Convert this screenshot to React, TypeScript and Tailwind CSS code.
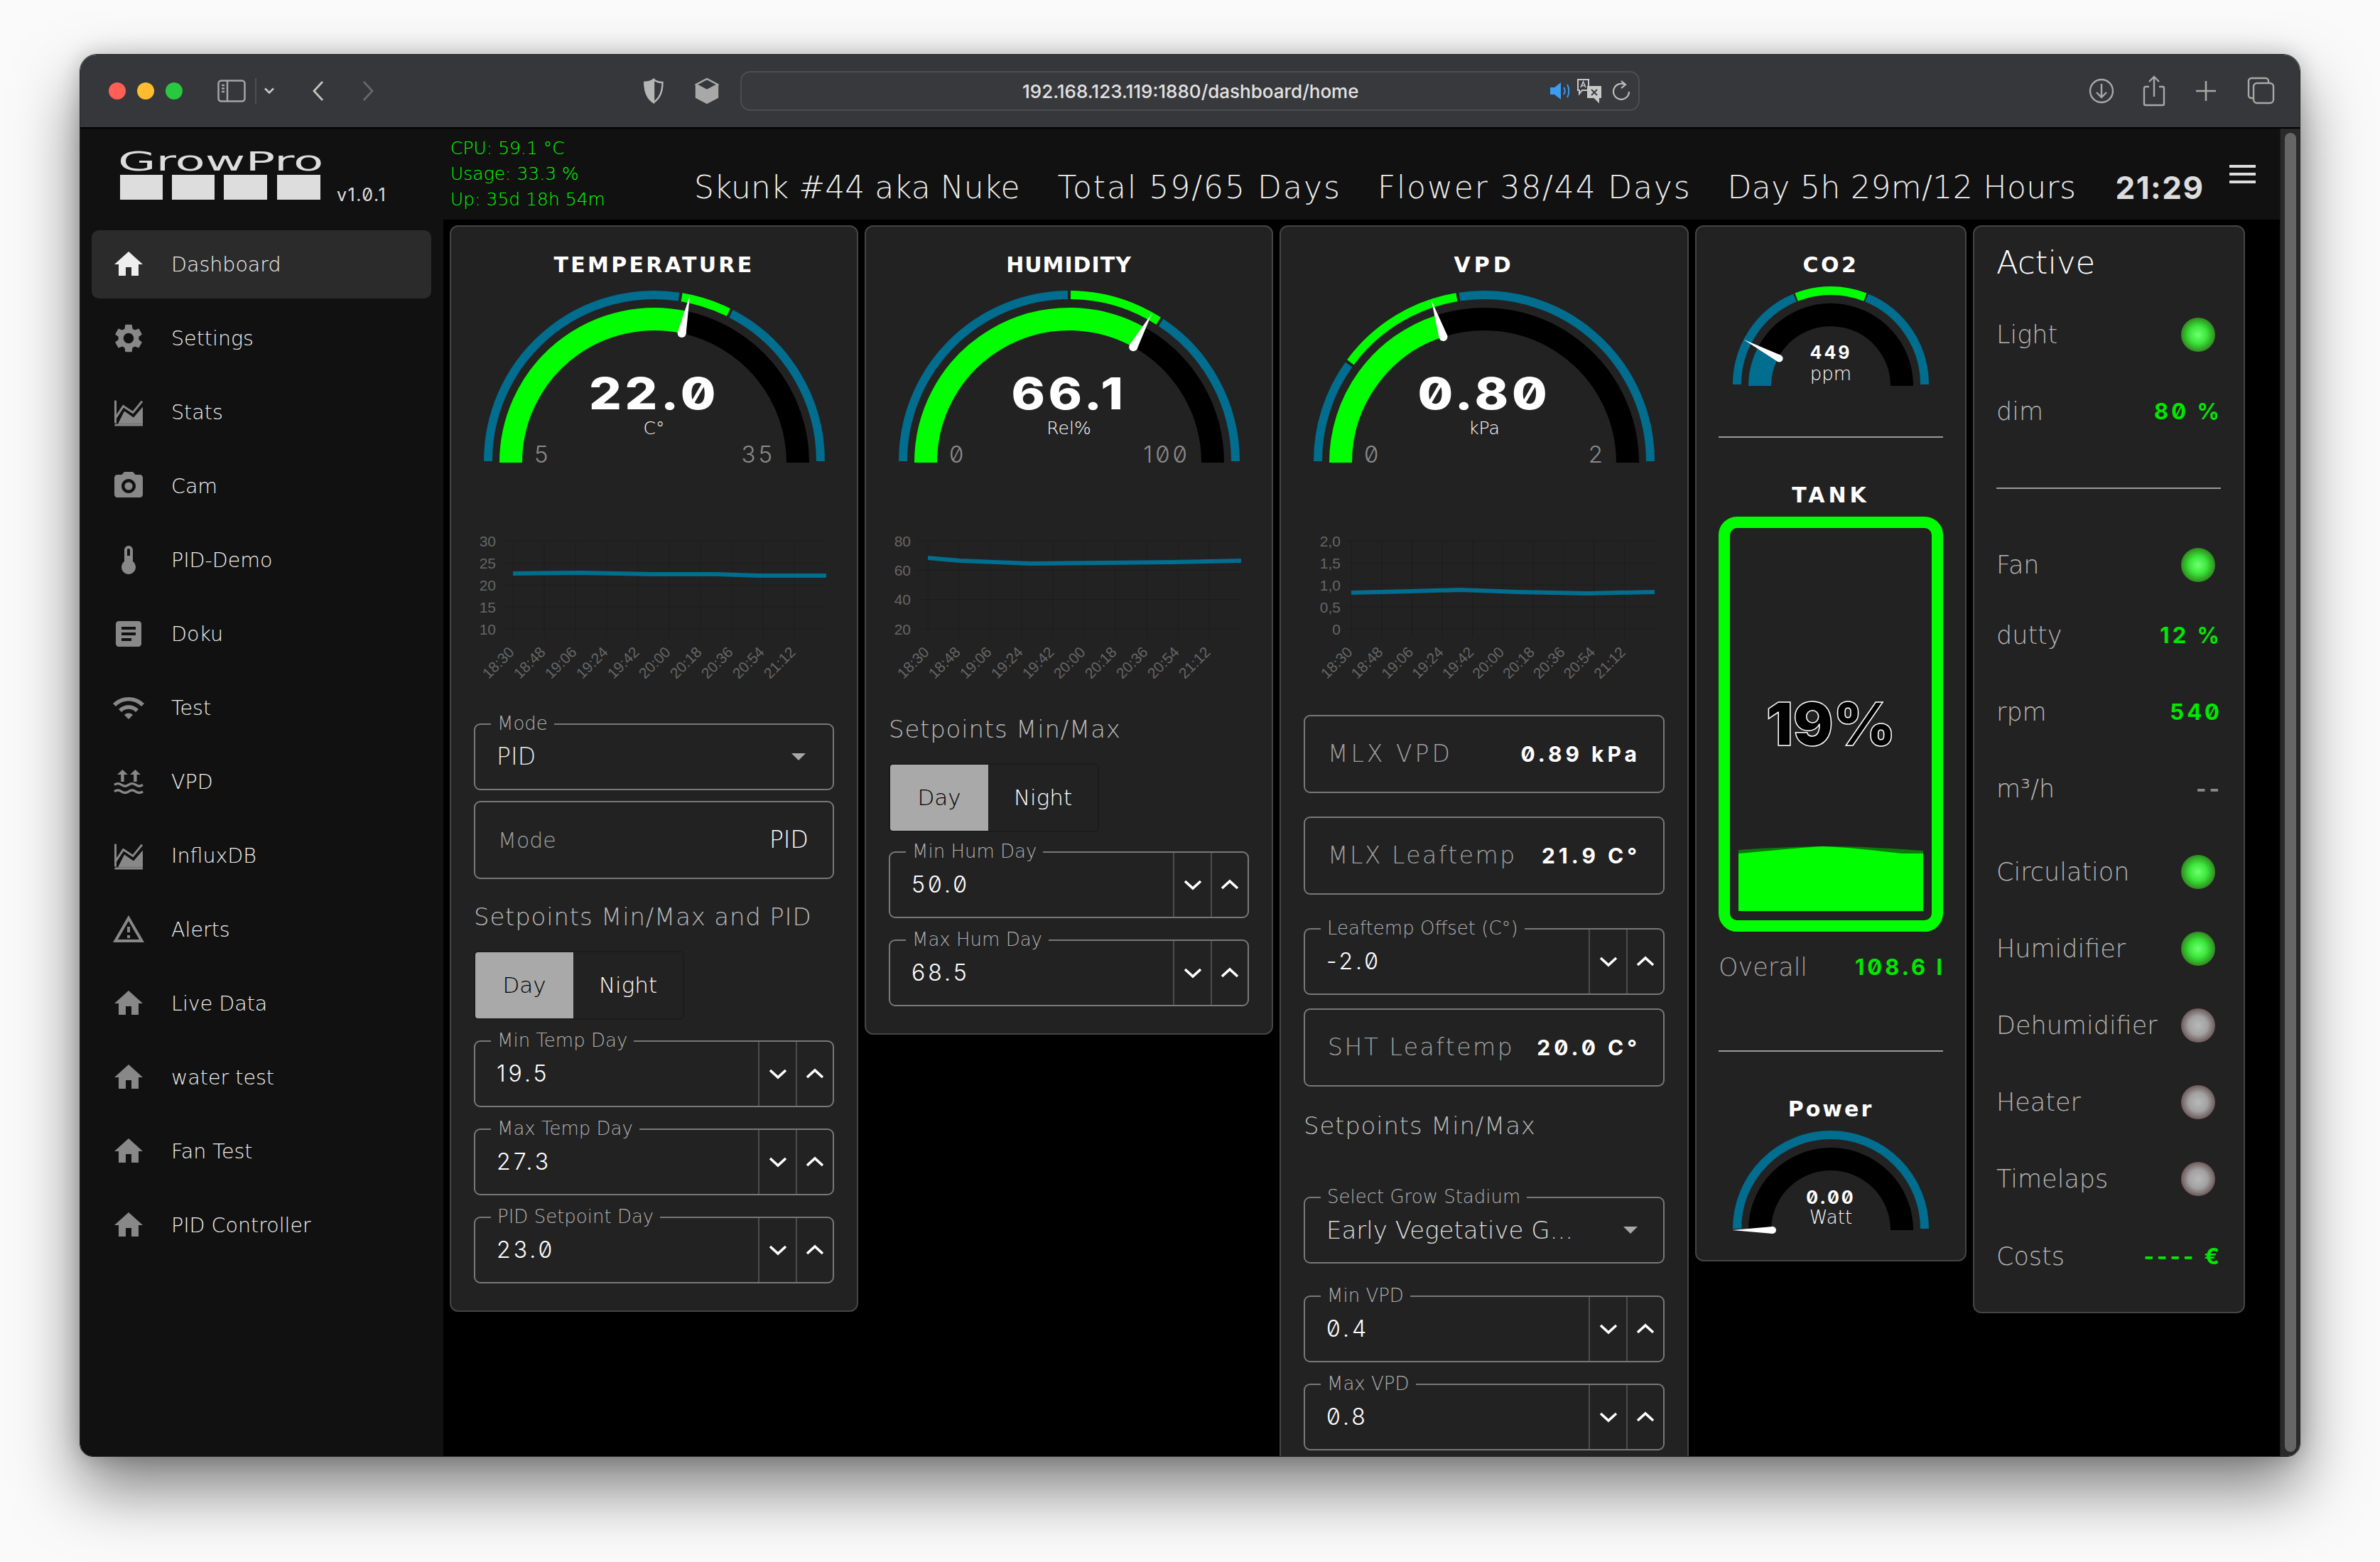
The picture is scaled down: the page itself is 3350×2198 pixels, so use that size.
import React from "react";

const BLUE = "#016d8f";
const GREEN = "#00ff00";

const pt = (cx: number, cy: number, r: number, a: number) => {
  const t = (a * Math.PI) / 180;
  return [cx - r * Math.cos(t), cy - r * Math.sin(t)];
};
const arc = (cx: number, cy: number, r: number, a: number, b: number) => {
  const [x1, y1] = pt(cx, cy, r, a);
  const [x2, y2] = pt(cx, cy, r, b);
  return `M ${x1} ${y1} A ${r} ${r} 0 0 1 ${x2} ${y2}`;
};

type Seg = [number, number, string];

function Dial(p: {
  w: number; h: number; cx: number; cy: number; rMain: number; sMain: number; rRing: number; sRing: number;
  segs: Seg[]; angle: number; fill: string; tip: number; base: number; br: number;
}) {
  const { w, h, cx, cy, rMain, sMain, rRing, sRing, segs, angle, fill, tip, base, br } = p;
  const [tx, ty] = pt(cx, cy, tip, angle);
  const [bx, by] = pt(cx, cy, base, angle);
  const t = (angle * Math.PI) / 180;
  const px = Math.sin(t) * br;
  const py = -Math.cos(t) * br;
  return (
    <svg width={w} height={h} viewBox={`0 0 ${w} ${h}`} className="block">
      {segs.map(([a, b, c], i) => (
        <path key={i} d={arc(cx, cy - 2, rRing, a === 0 ? 0 : a + 0.5, b === 180 ? 180 : b - 0.5)} fill="none" stroke={c} strokeWidth={sRing} />
      ))}
      {angle > 0 && <path d={arc(cx, cy, rMain, 0, angle)} fill="none" stroke={fill} strokeWidth={sMain} />}
      <path d={arc(cx, cy, rMain, angle, 180)} fill="none" stroke="#000" strokeWidth={sMain} />
      <polygon points={`${tx},${ty} ${bx + px},${by + py} ${bx - px},${by - py}`} fill="#fff" />
      <circle cx={bx} cy={by} r={br} fill="#fff" />
    </svg>
  );
}

function BigGauge(p: { value: string; unit: string; min: string; max: string; segs: Seg[]; angle: number }) {
  return (
    <div className="relative mt-[10px] h-[260px] w-full">
      <Dial w={507} h={260} cx={254} cy={250} rMain={202} sMain={32} rRing={234} sRing={12} segs={p.segs} angle={p.angle} fill={GREEN} tip={240} base={186} br={6} />
      <div className="absolute left-0 right-0 top-[122px] h-[62px] scale-x-[1.16] text-center font-['Inter',sans-serif] text-[62px] font-extrabold leading-[62px] tracking-[4px] text-white slashed-zero">{p.value}</div>
      <div className="absolute left-0 right-0 top-[187px] h-[30px] text-center text-[25px] leading-[30px] text-white">{p.unit}</div>
      <div className="absolute left-[85px] top-[220px] h-[36px] font-['Inter',sans-serif] text-[33px] font-light leading-[36px] tracking-[4px] text-[#8a8a8a] slashed-zero">{p.min}</div>
      <div className="absolute right-[83px] top-[220px] h-[36px] font-['Inter',sans-serif] text-[33px] font-light leading-[36px] tracking-[4px] text-[#8a8a8a] slashed-zero">{p.max}</div>
    </div>
  );
}

function SmallGauge(p: { value: string; unit: string; segs: Seg[]; angle: number; fill: string; cy: number; mt: string; vTop: string; uTop: string }) {
  return (
    <div className={`relative h-[150px] w-full ${p.mt}`}>
      <Dial w={316} h={150} cx={158} cy={p.cy} rMain={100} sMain={32} rRing={132} sRing={12} segs={p.segs} angle={p.angle} fill={p.fill} tip={139} base={82} br={5} />
      <div className={`absolute left-0 right-0 h-[30px] text-center font-['Inter',sans-serif] text-[25px] font-bold leading-[30px] tracking-[3px] text-white slashed-zero ${p.vTop}`}>{p.value}</div>
      <div className={`absolute left-0 right-0 h-[30px] text-center text-[26px] leading-[30px] text-white ${p.uTop}`}>{p.unit}</div>
    </div>
  );
}

const TIMES = ["18:30", "18:48", "19:06", "19:24", "19:42", "20:00", "20:18", "20:36", "20:54", "21:12"];

function Chart(p: { labels: string[]; data: string; x0: number; step: number; left: number }) {
  const n = p.labels.length;
  const gap = 124 / (n - 1);
  return (
    <svg width={507} height={215} viewBox="0 0 507 215" className="mt-[88px] block">
      {p.labels.map((l, i) => (
        <g key={l}>
          <line x1={p.left} x2={496} y1={12 + i * gap} y2={12 + i * gap} stroke="#1c1c1c" strokeWidth={1} />
          <text x={p.left - 8} y={19.5 + i * gap} textAnchor="end" className="fill-[#666666] font-['Liberation_Sans',sans-serif] text-[21px] font-normal">{l}</text>
        </g>
      ))}
      {TIMES.map((t, i) => {
        const x = p.x0 + i * p.step;
        return (
          <g key={t}>
            <line x1={x} x2={x} y1={12} y2={148} stroke="#1c1c1c" strokeWidth={1} />
            <text x={x + 3} y={170} textAnchor="end" transform={`rotate(-45 ${x + 3} 170)`} className="fill-[#666666] font-['Liberation_Sans',sans-serif] text-[21px] font-normal">{t}</text>
          </g>
        );
      })}
      <polyline points={p.data} fill="none" stroke={BLUE} strokeWidth={6} />
    </svg>
  );
}

const Down = () => (
  <svg width="26" height="16" viewBox="0 0 26 16"><path d="M2 3l11 10L24 3" fill="none" stroke="#fff" strokeWidth="3.6" /></svg>
);
const Up = () => (
  <svg width="26" height="16" viewBox="0 0 26 16"><path d="M2 13L13 3l11 10" fill="none" stroke="#fff" strokeWidth="3.6" /></svg>
);

function Legend({ children }: { children: React.ReactNode }) {
  return (
    <div className="absolute left-[22px] top-[-17px] h-[30px] bg-[#222222] px-[9px] text-[26px] leading-[30px] text-[#b0b0b0] whitespace-nowrap">{children}</div>
  );
}

function Stepper(p: { label: string; value: string; mt: string }) {
  return (
    <div className={`relative flex h-[94px] items-stretch rounded-[9px] border-2 border-[#787878] ${p.mt}`}>
      <Legend>{p.label}</Legend>
      <div className="flex flex-1 items-center pl-[30px] font-['Inter',sans-serif] text-[32px] font-light tracking-[4px] text-white slashed-zero">{p.value}</div>
      <div className="flex w-[53px] items-center justify-center border-l-2 border-[#4c4c4c]"><Down /></div>
      <div className="flex w-[52px] items-center justify-center border-l-2 border-[#4c4c4c]"><Up /></div>
    </div>
  );
}

function Picker(p: { label: string; value: string; mt: string; caret: string; textCls: string }) {
  return (
    <div className={`relative flex h-[94px] items-center rounded-[9px] border-2 border-[#787878] pl-[30px] ${p.mt}`}>
      <Legend>{p.label}</Legend>
      <div className={p.textCls}>{p.value}</div>
      <div className={`ml-auto h-0 w-0 border-x-[10px] border-t-[10px] border-x-transparent border-t-[#a8a8a8] ${p.caret}`} />
    </div>
  );
}

function InfoBox(p: { label: string; value: string; mt: string; track: string; valueCls: string }) {
  return (
    <div className={`flex h-[110px] items-center justify-between rounded-[9px] border-2 border-[#787878] pl-[32px] pr-[32px] ${p.mt}`}>
      <span className={`text-[33px] text-[#a0a0a0] ${p.track}`}>{p.label}</span>
      <span className={p.valueCls}>{p.value}</span>
    </div>
  );
}

function DayNight({ mt }: { mt: string }) {
  return (
    <div className={`flex h-[97px] w-[296px] overflow-hidden rounded-[6px] border-2 border-[#1c1c1c] text-[31px] ${mt}`}>
      <div className="flex w-[138px] items-center justify-center bg-[#a9a9a9] text-black">Day</div>
      <div className="flex flex-1 items-center justify-center text-white">Night</div>
    </div>
  );
}

const Heading = ({ children, mt }: { children: string; mt: string }) => (
  <div className={`h-[44px] text-[34px] leading-[44px] tracking-[0.8px] text-[#b8b8b8] ${mt}`}>{children}</div>
);

const Title = ({ children, cls = "" }: { children: string; cls?: string }) => (
  <div className={`h-[36px] text-center text-[30px] font-bold leading-[36px] text-white ${cls}`}>{children}</div>
);

const Card = ({ w, pad, children }: { w: string; pad: string; children: React.ReactNode }) => (
  <section className={`shrink-0 rounded-[12px] border-2 border-[#444444] bg-[#222222] ${w} ${pad}`}>{children}</section>
);

const Divider = ({ mt }: { mt: string }) => <div className={`h-[2px] bg-[#9a9a9a] ${mt}`} />;

const Home = (
  <path d="M10 20v-6h4v6h5v-8h3L12 3 2 12h3v8z" />
);
const AreaIcon = (
  <g transform="translate(2 3.8) scale(0.5)">
    <path d="M0 0h3v32H0z" />
    <path d="M0 36l1-3h39v3z" />
    <path d="M5 33l9-18 13 9 13-15v24z" />
    <path d="M2 24L12.5 8l13.5 9L39 1" fill="none" stroke="currentColor" strokeWidth="3" />
  </g>
);

const NAV: [string, React.ReactNode][] = [
  ["Dashboard", Home],
  ["Settings", <path d="M19.14 12.94c.04-.3.06-.61.06-.94 0-.32-.02-.64-.07-.94l2.03-1.58c.18-.14.23-.41.12-.61l-1.92-3.32c-.12-.22-.37-.29-.59-.22l-2.39.96c-.5-.38-1.03-.7-1.62-.94l-.36-2.54c-.04-.24-.24-.41-.48-.41h-3.84c-.24 0-.43.17-.47.41l-.36 2.54c-.59.24-1.13.57-1.62.94l-2.39-.96c-.22-.08-.47 0-.59.22L2.74 8.87c-.12.21-.08.47.12.61l2.03 1.58c-.05.3-.09.63-.09.94s.02.64.07.94l-2.03 1.58c-.18.14-.23.41-.12.61l1.92 3.32c.12.22.37.29.59.22l2.39-.96c.5.38 1.03.7 1.62.94l.36 2.54c.05.24.24.41.48.41h3.84c.24 0 .44-.17.47-.41l.36-2.54c.59-.24 1.13-.56 1.62-.94l2.39.96c.22.08.47 0 .59-.22l1.92-3.32c.12-.22.07-.47-.12-.61l-2.01-1.58zM12 15.6c-1.98 0-3.6-1.62-3.6-3.6s1.62-3.6 3.6-3.6 3.6 1.62 3.6 3.6-1.62 3.6-3.6 3.6z" />],
  ["Stats", AreaIcon],
  ["Cam", <path fillRule="evenodd" d="M9 2 7.17 4H4c-1.1 0-2 .9-2 2v12c0 1.1.9 2 2 2h16c1.1 0 2-.9 2-2V6c0-1.1-.9-2-2-2h-3.17L15 2H9zm3 15c-2.76 0-5-2.24-5-5s2.24-5 5-5 5 2.24 5 5-2.24 5-5 5zm0-2.2a2.8 2.8 0 1 0 0-5.6 2.8 2.8 0 0 0 0 5.6z" />],
  ["PID-Demo", <path d="M15 13V5c0-1.66-1.34-3-3-3S9 3.34 9 5v8c-1.21.91-2 2.37-2 4 0 2.76 2.24 5 5 5s5-2.24 5-5c0-1.63-.79-3.09-2-4zm-4-8c0-.55.45-1 1-1s1 .45 1 1v4h-2V5z" fillRule="evenodd" />],
  ["Doku", <path d="M19 3H5c-1.1 0-2 .9-2 2v14c0 1.1.9 2 2 2h14c1.1 0 2-.9 2-2V5c0-1.1-.9-2-2-2zm-5 14H7v-2h7v2zm3-4H7v-2h10v2zm0-4H7V7h10v2z" />],
  ["Test", <path d="M1 9l2 2c4.97-4.97 13.03-4.97 18 0l2-2C16.93 2.93 7.08 2.93 1 9zm8 8 3 3 3-3c-1.65-1.66-4.34-1.66-6 0zm-4-4 2 2c2.76-2.76 7.24-2.76 10 0l2-2C15.14 9.14 8.87 9.14 5 13z" />],
  ["VPD", (
    <g>
      <path d="M7.7 3.5L4 7h2.6v5h2.2V7h2.6zM16.7 3.5L13 7h2.6v5h2.2V7h2.6z" />
      <path d="M2 14.2c1.7-1.2 3.3-1.2 5 0s3.3 1.2 5 0 3.3-1.2 5 0 3.3 1.2 5 0M2 18.9c1.7-1.2 3.3-1.2 5 0s3.3 1.2 5 0 3.3-1.2 5 0 3.3 1.2 5 0" fill="none" stroke="currentColor" strokeWidth="1.7" />
    </g>
  )],
  ["InfluxDB", AreaIcon],
  ["Alerts", <path d="M1 21h22L12 2 1 21zm3.47-2L12 5.99 19.53 19H4.47zM11 16h2v2h-2zm0-6h2v4h-2z" />],
  ["Live Data", Home],
  ["water test", Home],
  ["Fan Test", Home],
  ["PID Controller", Home],
];

function Sidebar() {
  return (
    <nav className="flex h-full w-[511px] shrink-0 flex-col gap-[8px] bg-[#111111] pl-[16px] pr-[17px] pt-[15px]">
      {NAV.map(([label, icon], i) => (
        <div key={label} className={`flex h-[96px] shrink-0 items-center gap-[36px] rounded-[10px] pl-[28px] text-[28.5px] text-[#f0f0f0] ${i === 0 ? "bg-[#2b2b2b]" : ""}`}>
          <svg width="48" height="48" viewBox="0 0 24 24" fill="currentColor" className={i === 0 ? "text-[#eeeeee]" : "text-[#888888]"}>{icon}</svg>
          <span className="mt-[2px]">{label}</span>
        </div>
      ))}
    </nav>
  );
}

const Led = ({ on }: { on: boolean }) => (
  <div className={`mr-[8px] h-[48px] w-[48px] rounded-full ${on ? "bg-[radial-gradient(circle_closest-side,#70ff70_0%,#3ce83c_50%,#2f8a1f_100%)]" : "bg-[radial-gradient(circle_closest-side,#b8b8b8_0%,#a2a2a2_55%,#6e5a5a_100%)]"}`} />
);

function Row(p: { label: string; mt: string; on?: boolean; value?: string; grey?: boolean }) {
  return (
    <div className={`flex h-[60px] items-center justify-between text-[35px] text-[#b4b4b4] ${p.mt}`}>
      <span>{p.label}</span>
      {p.on !== undefined && <Led on={p.on} />}
      {p.value && (
        <span className={`mr-[-2px] font-['Inter',sans-serif] text-[31px] font-bold tracking-[4px] slashed-zero ${p.grey ? "text-[#8a8a8a]" : "text-[#00e800]"}`}>{p.value}</span>
      )}
    </div>
  );
}

function Chrome() {
  const s = "none";
  return (
    <header className="flex h-[104px] shrink-0 items-center border-b-2 border-black bg-[#36373a] pl-[40px] pr-[34px]">
      <div className="h-[24px] w-[24px] rounded-full bg-[#ff5f57]" />
      <div className="ml-[16px] h-[24px] w-[24px] rounded-full bg-[#febc2e]" />
      <div className="ml-[16px] h-[24px] w-[24px] rounded-full bg-[#28c840]" />
      <svg width="40" height="32" viewBox="0 0 40 32" className="ml-[49px]" fill={s} stroke="#a5a5a7" strokeWidth="2.5">
        <rect x="1.5" y="1.5" width="37" height="29" rx="4" />
        <path d="M14 2v28M6 8h4M6 12.5h4M6 17h4" />
      </svg>
      <div className="ml-[13px] h-[36px] w-[2px] bg-[#4d4e51]" />
      <svg width="16" height="10" viewBox="0 0 16 10" className="ml-[10px]" fill={s} stroke="#c8c8c8" strokeWidth="2.5"><path d="M2 1.5l6 6 6-6" /></svg>
      <svg width="18" height="30" viewBox="0 0 18 30" className="ml-[52px]" fill={s} stroke="#c2c2c2" strokeWidth="2.8"><path d="M15 2L3 15l12 13" /></svg>
      <svg width="18" height="30" viewBox="0 0 18 30" className="ml-[52px]" fill={s} stroke="#66676a" strokeWidth="2.8"><path d="M3 2l12 13L3 28" /></svg>
      <svg width="30" height="36" viewBox="0 0 30 36" className="ml-[378px]" fill={s} stroke="#b5b5b5" strokeWidth="2.4">
        <path d="M15 2C11 5 6 6 2.5 6c0 12 3 22 12.5 28 9.5-6 12.5-16 12.5-28C24 6 19 5 15 2z" />
        <path d="M15 2C11 5 6 6 2.5 6c0 12 3 22 12.5 28z" fill="#b5b5b5" />
      </svg>
      <svg width="36" height="38" viewBox="0 0 36 38" className="ml-[42px]" fill={s} stroke="#a8a8a8" strokeWidth="2.4">
        <path d="M18 2L33 10v18L18 36 3 28V10z" fill="#a8a8a8" />
        <path d="M18 18L33 10 18 2 3 10z" fill="#36373a" />
      </svg>
      <div className="ml-[29px] flex h-[56px] w-[1266px] items-center rounded-[14px] border-2 border-[#4c4d50] bg-[#38393c] pr-[20px]">
        <span className="ml-[395px] whitespace-nowrap font-['Inter',sans-serif] text-[26px] font-medium text-[#e2e2e2]">192.168.123.119:1880/dashboard/home</span>
        <svg width="32" height="28" viewBox="0 0 32 28" className="ml-auto" fill="#3d9bf0">
          <path d="M2 9h6l9-7v24l-9-7H2z" />
          <path d="M21 9c2 3 2 7 0 10M26 5c3 5 3 13 0 18" fill="none" stroke="#3d9bf0" strokeWidth="2" />
        </svg>
        <svg width="38" height="36" viewBox="0 0 38 36" className="ml-[6px]" fill="none" stroke="#c8c8c8" strokeWidth="2">
          <path d="M3 2h15v15H9l-4 5v-5H3z" />
          <path d="M17 12h18v15h-3v6l-6-6h-9z" fill="#c8c8c8" />
          <path d="M7 13l3.5-8 3.5 8M8 10.5h5" strokeWidth="1.6" />
          <path d="M22 16l8 8M30 16l-8 8" stroke="#36373a" strokeWidth="1.8" />
        </svg>
        <svg width="28" height="32" viewBox="0 0 28 32" className="ml-[12px] mr-[-10px]" fill={s} stroke="#bdbdbd" strokeWidth="2.2">
          <path d="M19 7A11 11 0 1 0 25 17" />
          <path d="M14 2l6 5-6 5" />
        </svg>
      </div>
      <div className="ml-auto flex items-center">
        <svg width="38" height="38" viewBox="0 0 38 38" fill={s} stroke="#a8a8a8" strokeWidth="2.4"><circle cx="19" cy="19" r="16" /><path d="M19 9v19M12 21l7 7 7-7" /></svg>
        <svg width="34" height="44" viewBox="0 0 34 44" fill={s} stroke="#a8a8a8" strokeWidth="2.4" className="ml-[38px]"><path d="M10 16H5a2 2 0 0 0-2 2v22a2 2 0 0 0 2 2h24a2 2 0 0 0 2-2V18a2 2 0 0 0-2-2h-5M17 30V2M10 9l7-7 7 7" /></svg>
        <svg width="32" height="32" viewBox="0 0 32 32" fill={s} stroke="#a8a8a8" strokeWidth="2.6" className="ml-[40px]"><path d="M16 2v28M2 16h28" /></svg>
        <svg width="40" height="40" viewBox="0 0 40 40" fill={s} stroke="#a8a8a8" strokeWidth="2.4" className="ml-[42px]">
          <rect x="9" y="9" width="28" height="28" rx="5" />
          <path d="M9 30H6a4 4 0 0 1-4-4V6a4 4 0 0 1 4-4h20a4 4 0 0 1 4 4v3" />
        </svg>
      </div>
    </header>
  );
}

function TopBar() {
  return (
    <div className="flex h-[128px] shrink-0 items-start bg-[#111111] pl-[56px]">
      <div className="w-[465px] pt-[28px]">
        <div className="ml-[-3px] h-[37px] origin-left scale-x-[1.87] whitespace-nowrap text-[37px] font-normal leading-[38px] text-[#dddddd]">GrowPro</div>
        <div className="flex items-start">
          <div className="h-[35px] w-[60px] bg-[#dddddd]" />
          <div className="ml-[13px] h-[35px] w-[60px] bg-[#dddddd]" />
          <div className="ml-[13px] h-[35px] w-[61px] bg-[#dddddd]" />
          <div className="ml-[14px] h-[35px] w-[61px] bg-[#dddddd]" />
          <div className="ml-[23px] mt-[14px] font-['Inter',sans-serif] text-[25px] font-normal leading-[28px] tracking-[1.5px] text-[#dddddd] slashed-zero">v1.0.1</div>
        </div>
      </div>
      <div className="w-[343px] pt-[10px] text-[25px] leading-[36px] text-[#00ff00]">
        <div>CPU: 59.1 °C</div>
        <div>Usage: 33.3 %</div>
        <div>Up: 35d 18h 54m</div>
      </div>
      <div className="flex items-center whitespace-nowrap pt-[57px] text-[44px] leading-[52px] text-[#eeeeee]">
        <span>Skunk #44 aka Nuke</span>
        <span className="ml-[53px] tracking-[2px]">Total 59/65 Days</span>
        <span className="ml-[51px] tracking-[1.85px]">Flower 38/44 Days</span>
        <span className="ml-[51px] tracking-[0.4px]">Day 5h 29m/12 Hours</span>
        <span className="ml-[55px] font-['Inter',sans-serif] font-bold tracking-[1.5px] text-[#dddddd]">21:29</span>
      </div>
      <div className="ml-[35px] mt-[51px] flex w-[37px] flex-col gap-[7px]">
        <div className="h-[4px] bg-[#dddddd]" />
        <div className="h-[4px] bg-[#dddddd]" />
        <div className="h-[4px] bg-[#dddddd]" />
      </div>
    </div>
  );
}

const valueField = "font-['Inter',sans-serif] text-[30px] font-bold tracking-[5px] text-white slashed-zero";

function Tank() {
  return (
    <div className="relative mt-[12px] flex h-[584px] items-center justify-center rounded-[26px] border-[16px] border-[#00ff00] bg-[#222222]">
      <svg width="260" height="91" viewBox="0 0 260 91" className="absolute bottom-[13px] left-[12px]">
        <path d="M0 5C40 2 90 0 130 0c40 0 90 3 130 6v85H0z" fill="#0a7a0a" />
        <path d="M0 10C30 8 70 3 118 0c30 1 60 4 112 10h30v81H0z" fill="#00ff00" />
      </svg>
      <div className="relative font-['Inter',sans-serif] text-[84px] font-black leading-none text-black [-webkit-text-stroke:1.5px_white]">19%</div>
    </div>
  );
}

export default function App() {
  return (
    <div className="h-[2198px] w-[3350px] overflow-hidden bg-[#fafafa] pl-[112px] pt-[76px] font-['DejaVu_Sans',sans-serif] font-extralight">
      <div className="flex h-[1974px] w-[3126px] flex-col overflow-hidden rounded-t-[24px] rounded-b-[18px] border border-[#222222] shadow-[0_44px_90px_rgba(0,0,0,0.5),0_0_30px_rgba(0,0,0,0.2)]">
        <Chrome />
        <div className="flex min-h-0 flex-1">
          <div className="flex min-w-0 flex-1 flex-col">
            <TopBar />
            <div className="flex min-h-0 flex-1">
              <Sidebar />
              <main className="flex min-h-0 flex-1 items-start gap-[9px] overflow-hidden bg-black pl-[9px] pt-[8px]">
                <Card w="w-[575px]" pad="px-[32px] pt-[36px] pb-[38px]">
                  <Title cls="tracking-[3.3px]">TEMPERATURE</Title>
                  <BigGauge value="22.0" unit="C°" min="5" max="35" angle={102} segs={[[0, 99, BLUE], [99, 117, GREEN], [117, 180, BLUE]]} />
                  <Chart left={39} x0={55} step={44} labels={["30", "25", "20", "15", "10"]} data="55,58 150,57 250,59 340,59 400,61 496,61" />
                  <Picker mt="mt-[54px]" label="Mode" value="PID" caret="mr-[38px]" textCls="text-[33px] text-[#eeeeee]" />
                  <div className="mt-[15px] flex h-[110px] items-center justify-between rounded-[9px] border-2 border-[#787878] pl-[32px] pr-[34px]">
                    <span className="text-[30px] text-[#a0a0a0]">Mode</span>
                    <span className="text-[33px] text-white">PID</span>
                  </div>
                  <Heading mt="mt-[31px]">Setpoints Min/Max and PID</Heading>
                  <DayNight mt="mt-[26px]" />
                  <Stepper mt="mt-[29px]" label="Min Temp Day" value="19.5" />
                  <Stepper mt="mt-[30px]" label="Max Temp Day" value="27.3" />
                  <Stepper mt="mt-[30px]" label="PID Setpoint Day" value="23.0" />
                </Card>

                <Card w="w-[575px]" pad="px-[32px] pt-[36px] pb-[38px]">
                  <Title cls="tracking-[1px]">HUMIDITY</Title>
                  <BigGauge value="66.1" unit="Rel%" min="0" max="100" angle={119} segs={[[0, 90, BLUE], [90, 123, GREEN], [123, 180, BLUE]]} />
                  <Chart left={39} x0={55} step={44} labels={["80", "60", "40", "20"]} data="55,36 100,40 200,44 300,43 400,42 496,40" />
                  <Heading mt="mt-[40px]">Setpoints Min/Max</Heading>
                  <DayNight mt="mt-[26px]" />
                  <Stepper mt="mt-[27px]" label="Min Hum Day" value="50.0" />
                  <Stepper mt="mt-[30px]" label="Max Hum Day" value="68.5" />
                </Card>

                <Card w="w-[576px]" pad="px-[32px] pt-[36px] pb-[38px]">
                  <Title cls="tracking-[5px]">VPD</Title>
                  <BigGauge value="0.80" unit="kPa" min="0" max="2" angle={72} segs={[[0, 36, BLUE], [36, 81, GREEN], [81, 180, BLUE]]} />
                  <Chart left={60} x0={67} step={42.7} labels={["2,0", "1,5", "1,0", "0,5", "0"]} data="67,85 150,83 220,81 300,84 400,86 494,84" />
                  <InfoBox mt="mt-[42px]" track="tracking-[4px]" label="MLX VPD" value="0.89 kPa" valueCls={valueField} />
                  <InfoBox mt="mt-[33px]" track="tracking-[2.5px]" label="MLX Leaftemp" value="21.9 C°" valueCls={valueField} />
                  <Stepper mt="mt-[47px]" label="Leaftemp Offset (C°)" value="-2.0" />
                  <InfoBox mt="mt-[19px]" track="tracking-[2.5px]" label="SHT Leaftemp" value="20.0 C°" valueCls={valueField} />
                  <Heading mt="mt-[33px]">Setpoints Min/Max</Heading>
                  <Picker mt="mt-[78px]" label="Select Grow Stadium" value="Early Vegetative G..." caret="mr-[36px]" textCls="text-[34px] text-[#dddddd] whitespace-nowrap" />
                  <Stepper mt="mt-[45px]" label="Min VPD" value="0.4" />
                  <Stepper mt="mt-[30px]" label="Max VPD" value="0.8" />
                </Card>

                <Card w="w-[382px]" pad="px-[31px] pt-[36px] pb-[32px]">
                  <Title cls="tracking-[3.5px]">CO2</Title>
                  <SmallGauge mt="mt-[10px]" cy={142} vTop="top-[80px]" uTop="top-[110px]" value="449" unit="ppm" fill={BLUE} angle={28} segs={[[0, 68, BLUE], [68, 112, GREEN], [112, 180, BLUE]]} />
                  <Divider mt="mt-[63px]" />
                  <Title cls="mt-[63px] tracking-[5px]">TANK</Title>
                  <Tank />
                  <div className="mt-[30px] flex h-[40px] items-center justify-between">
                    <span className="text-[35px] text-[#a0a0a0]">Overall</span>
                    <span className="mr-[-3px] font-['Inter',sans-serif] text-[31px] font-bold tracking-[4px] text-[#00e800] slashed-zero">108.6 l</span>
                  </div>
                  <Divider mt="mt-[97px]" />
                  <Title cls="mt-[63px] tracking-[3px]">Power</Title>
                  <SmallGauge mt="mt-[12px]" cy={140} vTop="top-[79px]" uTop="top-[107px]" value="0.00" unit="Watt" fill={BLUE} angle={0} segs={[[0, 180, BLUE]]} />
                </Card>

                <Card w="w-[383px]" pad="pl-[31px] pr-[32px] pt-[27px] pb-[48px]">
                  <div className="h-[48px] text-[45px] leading-[48px] text-white">Active</div>
                  <Row mt="mt-[47px]" label="Light" on />
                  <Row mt="mt-[48px]" label="dim" value="80 %" />
                  <Divider mt="mt-[77px]" />
                  <Row mt="mt-[77px]" label="Fan" on />
                  <Row mt="mt-[39px]" label="dutty" value="12 %" />
                  <Row mt="mt-[48px]" label="rpm" value="540" />
                  <Row mt="mt-[48px]" label="m³/h" value="--" grey />
                  <Row mt="mt-[57px]" label="Circulation" on />
                  <Row mt="mt-[48px]" label="Humidifier" on />
                  <Row mt="mt-[48px]" label="Dehumidifier" on={false} />
                  <Row mt="mt-[48px]" label="Heater" on={false} />
                  <Row mt="mt-[48px]" label="Timelaps" on={false} />
                  <Row mt="mt-[49px]" label="Costs" value="---- €" />
                </Card>
              </main>
            </div>
          </div>
          <div className="w-[28px] shrink-0 border-l border-[#1a1a1a] bg-[#2a2a2a] pb-[6px] pl-[6px] pr-[5px] pt-[6px]">
            <div className="h-full rounded-full bg-[#666666]" />
          </div>
        </div>
      </div>
    </div>
  );
}
